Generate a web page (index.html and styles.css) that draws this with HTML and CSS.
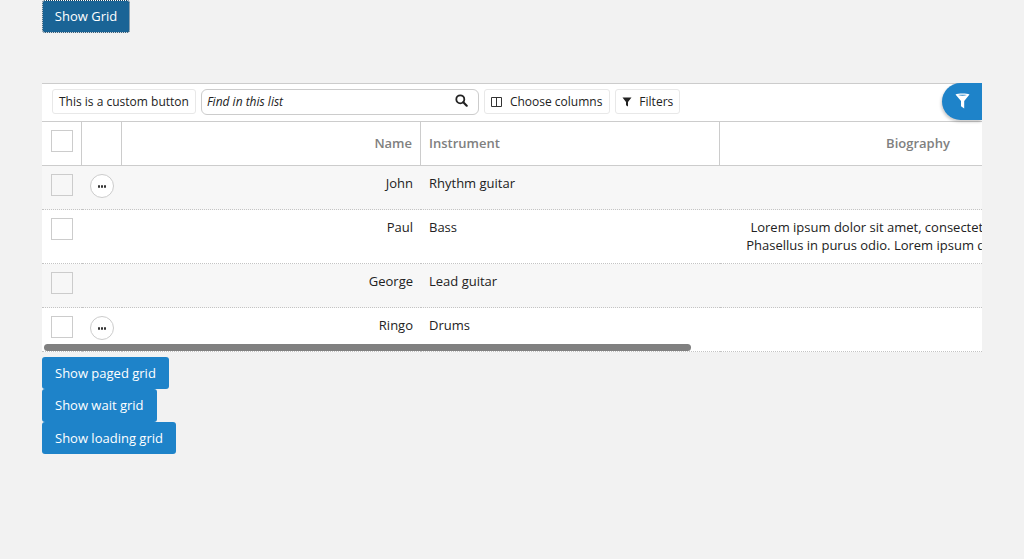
FILE: index.html
```html
<!DOCTYPE html>
<html lang="en">

<head>
    <meta charset="UTF-8">
    <title>Grid</title>
    <link rel="stylesheet" href="styles.css">
</head>

<body>
    <button type="button" class="btn btn-focus">Show Grid</button>

    <div class="grid">
        <div class="toolbar">
            <button type="button" class="tool-btn">This is a custom button</button>
            <div class="search">
                <span class="search-text">Find in this list</span>
                <svg class="search-icon" viewBox="0 0 13 13" width="13" height="13">
                    <circle cx="5.300" cy="5.300" r="4" fill="none" stroke="#222" stroke-width="1.800" />
                    <path d="M8.300 8.300l3.400 3.400" stroke="#222" stroke-width="2.200" stroke-linecap="round" />
                </svg>
            </div>
            <button type="button" class="tool-btn icon-btn">
                <svg viewBox="0 0 11 10" width="11" height="10">
                    <path d="M.5.5h10v9H.5zM5.500.5v9" fill="none" stroke="#333" />
                </svg>
                Choose columns
            </button>
            <button type="button" class="tool-btn icon-btn filters-btn">
                <svg viewBox="0 0 10 10" width="10" height="10">
                    <path d="M.5.500h9L6 5v4.500L4 8.300V5z" fill="#222" />
                </svg>
                Filters
            </button>
        </div>
        <button type="button" class="filter-fab" aria-label="Filter">
            <svg viewBox="0 0 15 16" width="15" height="16">
                <path d="M.5 1.500C3 .2 12 .2 14.500 1.500L9.200 8V15.500L6 13.200V8z" fill="#fff" />
                <path d="M3 2.100c3-.5 6-.5 9 0-3 .7-6 .7-9 0z" fill="#1e83c9" />
            </svg>
        </button>

        <table class="data">
            <colgroup>
                <col class="col-check">
                <col class="col-action">
                <col class="col-name">
                <col class="col-inst">
                <col class="col-bio">
            </colgroup>
            <thead>
                <tr>
                    <th class="cell-check"><span class="check"></span></th>
                    <th></th>
                    <th class="right">Name</th>
                    <th class="left">Instrument</th>
                    <th class="center">Biography</th>
                </tr>
            </thead>
            <tbody>
                <tr class="alt">
                    <td class="cell-check"><span class="check"></span></td>
                    <td class="cell-action"><span class="more"><i></i><i></i><i></i></span></td>
                    <td class="right">John</td>
                    <td>Rhythm guitar</td>
                    <td class="center bio"></td>
                </tr>
                <tr class="tall">
                    <td class="cell-check"><span class="check"></span></td>
                    <td></td>
                    <td class="right">Paul</td>
                    <td>Bass</td>
                    <td class="center bio">Lorem ipsum dolor sit amet, consectetur adipiscing elit.<br>Phasellus in purus odio. Lorem ipsum dolor sit amet sed.</td>
                </tr>
                <tr class="alt">
                    <td class="cell-check"><span class="check"></span></td>
                    <td></td>
                    <td class="right">George</td>
                    <td>Lead guitar</td>
                    <td class="center bio"></td>
                </tr>
                <tr>
                    <td class="cell-check"><span class="check"></span></td>
                    <td class="cell-action"><span class="more"><i></i><i></i><i></i></span></td>
                    <td class="right">Ringo</td>
                    <td>Drums</td>
                    <td class="center bio"></td>
                </tr>
            </tbody>
        </table>
        <div class="scroll-thumb"></div>
    </div>

    <div class="actions">
        <button type="button" class="btn">Show paged grid</button>
        <button type="button" class="btn">Show wait grid</button>
        <button type="button" class="btn">Show loading grid</button>
    </div>
</body>

</html>
```

FILE: styles.css
```css
html {
    background-color: #f2f2f2;
}

body {
    margin: 0;
    padding: 0 42px;
    font-family: "Open Sans", sans-serif;
    font-size: 13px;
    color: #222;
}

.btn {
    display: block;
    height: 32.33px;
    padding: 0 13px;
    border: none;
    border-radius: 3px;
    background-color: #1e83c9;
    color: white;
    font-family: inherit;
    font-size: 13px;
}

.btn-focus {
    height: 33px;
    width: 88px;
    padding: 0 0 2px;
    border: 1px solid #123f5e;
    background-color: #1a6496;
    outline: 1px dotted white;
    outline-offset: -1px;
}

.grid {
    position: relative;
    width: 940px;
    margin-top: 50px;
    background-color: white;
    overflow: hidden;
}

.toolbar {
    display: flex;
    align-items: flex-start;
    gap: 5px;
    box-sizing: border-box;
    height: 39px;
    padding: 5px 0 0 10px;
    border-top: 1px solid #ccc;
    border-bottom: 1px solid #ccc;
}

.tool-btn {
    height: 25px;
    padding: 0 6px;
    border: 1px solid #e8e8e8;
    border-radius: 3px;
    background-color: white;
    color: #222;
    font-family: inherit;
    font-size: 12px;
    white-space: nowrap;
}

.icon-btn {
    display: flex;
    align-items: center;
    gap: 8px;
    padding-right: 7px;
}

.filters-btn {
    gap: 7px;
    padding-right: 6px;
}

.search {
    display: flex;
    align-items: center;
    justify-content: space-between;
    box-sizing: border-box;
    width: 278px;
    height: 26px;
    padding: 0 10px 0 5px;
    border: 1px solid #ccc;
    border-radius: 6px;
    font-size: 12px;
    font-style: italic;
}

.search-text {
    margin-bottom: 2px;
}

.search-icon {
    margin-bottom: 3px;
}

.filter-fab {
    position: absolute;
    top: 0;
    right: 0;
    width: 40px;
    height: 37px;
    padding: 0;
    border: none;
    border-radius: 19px 0 0 19px;
    background-color: #1e83c9;
    box-shadow: -1px 2px 3px rgba(0, 0, 0, 0.2);
}

.filter-fab svg {
    display: block;
    margin: 0 0 2px 13px;
}

.data {
    table-layout: fixed;
    width: 1076px;
    border-collapse: separate;
    border-spacing: 0;
}

.col-check,
.col-action {
    width: 40px;
}

.col-name,
.col-inst {
    width: 299px;
}

.col-bio {
    width: 398px;
}

th {
    box-sizing: border-box;
    height: 44px;
    padding: 0 8px 2px;
    border-right: 1px solid #ccc;
    border-bottom: 1px solid #ccc;
    color: #808080;
    font-size: 13px;
    font-weight: 600;
}

th:last-child {
    border-right: none;
    padding-right: 10px;
}

td {
    height: 44px;
    padding: 8px 8px 0;
    box-sizing: border-box;
    border-bottom: 1px dotted #c4c4c4;
    vertical-align: top;
    white-space: nowrap;
    overflow: hidden;
    line-height: 18px;
}

.tall td {
    height: 54px;
}

.alt td {
    background-color: #f7f7f7;
}

.right {
    text-align: right;
}

.left {
    text-align: left;
}

.center {
    text-align: center;
}

td.bio {
    padding-right: 10px;
}

th.cell-check,
td.cell-check {
    padding: 8px 0 0 9px;
    text-align: left;
    vertical-align: top;
}

.check {
    display: block;
    box-sizing: border-box;
    width: 22px;
    height: 22px;
    border: 1px solid #ccc;
    background-color: white;
}

.alt .check {
    background-color: #f7f7f7;
}

.cell-action {
    padding-left: 8px;
}

.more {
    display: flex;
    align-items: center;
    justify-content: center;
    gap: 1px;
    box-sizing: border-box;
    width: 24px;
    height: 24px;
    border: 1px solid #ccc;
    border-radius: 50%;
    background-color: white;
}

.more i {
    width: 2px;
    height: 3px;
    border-radius: 1px;
    background-color: #333;
}

.scroll-thumb {
    position: absolute;
    left: 2px;
    bottom: 1px;
    width: 647px;
    height: 7px;
    border-radius: 4px;
    background-color: #808080;
}

.actions {
    margin-top: 5px;
}
```
